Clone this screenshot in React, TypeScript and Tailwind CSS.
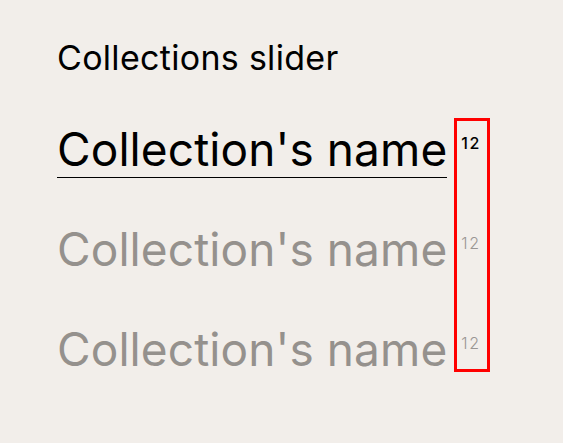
const names = [
  { active: true },
  { active: false },
  { active: false },
];

export default function App() {
  return (
    <div
      className="bg-[#f2eeea] w-[563px] h-[443px] text-black pl-[57px] pt-[38px]"
      style={{ fontFamily: "Inter, sans-serif" }}
    >
      <h1 className="text-[34px] leading-[40px] font-normal tracking-[0.3px] whitespace-nowrap">Collections slider</h1>
      <div className="flex items-start gap-[7px] mt-[40px]">
        <div className="flex flex-col gap-[43px] pt-[3px]">
          {names.map((n, i) => (
            <div key={i} className="flex">
              <span
                className={
                  n.active
                    ? "text-[46px] leading-[56px] tracking-[0.1px] whitespace-nowrap border-b border-black"
                    : "text-[46px] leading-[56px] tracking-[0.1px] whitespace-nowrap text-[#95918d] border-b border-transparent"
                }
              >
                Collection's name
              </span>
            </div>
          ))}
        </div>
        <div className="border-[3px] border-[#ff0000] w-[36px] h-[254px] pl-[4px] pt-[13px] flex flex-col gap-[82px]">
          {names.map((n, i) => (
            <div
              key={i}
              className={
                n.active
                  ? "text-[16px] leading-[18px] tracking-[1.5px] font-medium text-black"
                  : "text-[16px] leading-[18px] tracking-[1.5px] font-light text-[#9a9693]"
              }
            >
              12
            </div>
          ))}
        </div>
      </div>
    </div>
  );
}
